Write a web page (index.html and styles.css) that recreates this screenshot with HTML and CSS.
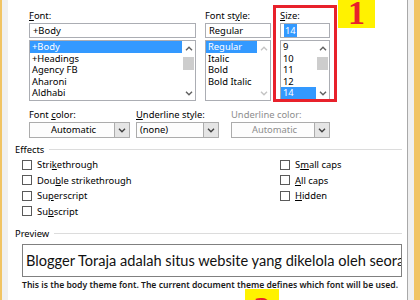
FILE: index.html
```html
<!DOCTYPE html>
<html lang="en">
<head>
  <meta charset="UTF-8" />
  <title>Font</title>
  <link rel="stylesheet" href="styles.css">
</head>
<body>
  <div class="window">
    <div class="dialog">
      <div class="font-grid">
        <div class="field">
          <div class="label"><u>F</u>ont:</div>
          <div class="textbox">+Body</div>
          <div class="listbox">
            <ul>
              <li class="selected">+Body</li>
              <li>+Headings</li>
              <li>Agency FB</li>
              <li>Aharoni</li>
              <li>Aldhabi</li>
            </ul>
            <div class="scrollbar">
              <svg class="arrow" viewBox="0 0 8 5" width="8" height="5"><path d="M1 4.2 L4 1.2 L7 4.2" fill="none" stroke="#606060" stroke-width="1.4"/></svg>
              <div class="track"><span class="thumb"></span></div>
              <svg class="arrow" viewBox="0 0 8 5" width="8" height="5"><path d="M1 0.8 L4 3.8 L7 0.8" fill="none" stroke="#606060" stroke-width="1.4"/></svg>
            </div>
          </div>
        </div>

        <div class="field">
          <div class="label">Font st<u>y</u>le:</div>
          <div class="textbox">Regular</div>
          <div class="listbox">
            <ul>
              <li class="selected">Regular</li>
              <li>Italic</li>
              <li>Bold</li>
              <li>Bold Italic</li>
            </ul>
            <div class="scrollbar">
              <svg class="arrow" viewBox="0 0 8 5" width="8" height="5"><path d="M1 4.2 L4 1.2 L7 4.2" fill="none" stroke="#c4c4c4" stroke-width="1.4"/></svg>
              <div class="track"></div>
              <svg class="arrow" viewBox="0 0 8 5" width="8" height="5"><path d="M1 0.8 L4 3.8 L7 0.8" fill="none" stroke="#c4c4c4" stroke-width="1.4"/></svg>
            </div>
          </div>
        </div>

        <div class="field">
          <div class="label"><u>S</u>ize:</div>
          <div class="textbox"><span class="text-selected">14</span></div>
          <div class="listbox">
            <ul>
              <li>9</li>
              <li>10</li>
              <li>11</li>
              <li>12</li>
              <li class="selected">14</li>
            </ul>
            <div class="scrollbar">
              <svg class="arrow" viewBox="0 0 8 5" width="8" height="5"><path d="M1 4.2 L4 1.2 L7 4.2" fill="none" stroke="#606060" stroke-width="1.4"/></svg>
              <div class="track"><span class="thumb"></span></div>
              <svg class="arrow" viewBox="0 0 8 5" width="8" height="5"><path d="M1 0.8 L4 3.8 L7 0.8" fill="none" stroke="#606060" stroke-width="1.4"/></svg>
            </div>
          </div>
        </div>
      </div>

      <div class="combo-row">
        <div class="field color-field">
          <div class="label">Font <u>c</u>olor:</div>
          <div class="combo">
            <span class="combo-text center">Automatic</span>
            <span class="combo-btn"><svg viewBox="0 0 8 5" width="8" height="5"><path d="M1 0.8 L4 3.8 L7 0.8" fill="none" stroke="#404040" stroke-width="1.4"/></svg></span>
          </div>
        </div>
        <div class="field underline-field">
          <div class="label"><u>U</u>nderline style:</div>
          <div class="combo">
            <span class="combo-text">(none)</span>
            <span class="combo-btn"><svg viewBox="0 0 8 5" width="8" height="5"><path d="M1 0.8 L4 3.8 L7 0.8" fill="none" stroke="#404040" stroke-width="1.4"/></svg></span>
          </div>
        </div>
        <div class="field ucolor-field disabled">
          <div class="label">Underline color:</div>
          <div class="combo">
            <span class="combo-text center">Automatic</span>
            <span class="combo-btn"><svg viewBox="0 0 8 5" width="8" height="5"><path d="M1 0.8 L4 3.8 L7 0.8" fill="none" stroke="#404040" stroke-width="1.4"/></svg></span>
          </div>
        </div>
      </div>

      <div class="section-head"><span>Effects</span></div>
      <div class="effects">
        <div class="check-col">
          <div class="check"><span class="box"></span>Stri<u>k</u>ethrough</div>
          <div class="check"><span class="box"></span>Dou<u>b</u>le strikethrough</div>
          <div class="check"><span class="box"></span>Su<u>p</u>erscript</div>
          <div class="check"><span class="box"></span>Su<u>b</u>script</div>
        </div>
        <div class="check-col">
          <div class="check"><span class="box"></span>S<u>m</u>all caps</div>
          <div class="check"><span class="box"></span><u>A</u>ll caps</div>
          <div class="check"><span class="box"></span><u>H</u>idden</div>
        </div>
      </div>

      <div class="section-head preview-head"><span>Preview</span></div>
      <div class="preview">Blogger Toraja adalah situs website yang dikelola oleh seorang</div>
      <div class="preview-note">This is the body theme font. The current document theme defines which font will be used.</div>
    </div>
  </div>

  <div class="mark-box"></div>
  <div class="mark-label one">1</div>
  <div class="mark-label two">2</div>
</body>
</html>
```

FILE: styles.css
```css
body {
  margin: 0;
  height: 300px;
  overflow: hidden;
  background-color: #f1c463;
  font-family: "Noto Sans", "Open Sans", sans-serif;
  font-size: 9.4px;
  color: #000;
}

.window {
  height: 300px;
  margin: 0 6px 0 2px;
  padding: 0 6px;
  background-color: #f0f0f0;
  box-sizing: border-box;
}

.dialog {
  height: 100%;
  background-color: #fff;
  border-right: 1px solid #a9a9a9;
  box-sizing: border-box;
}

u {
  text-decoration-thickness: 1px;
  text-underline-offset: 1px;
}

.label {
  height: 12px;
  line-height: 12px;
  white-space: nowrap;
}

/* font / style / size lists */
.font-grid {
  display: grid;
  grid-template-columns: 167px 66px 50px;
  column-gap: 9px;
  padding: 10px 0 0 21px;
}

.textbox {
  height: 15px;
  margin-top: 1px;
  line-height: 13px;
  padding: 0 3px;
  border: 1px solid #abadb3;
  box-sizing: border-box;
  white-space: nowrap;
}

.text-selected {
  background-color: #3399ff;
  color: #fff;
  padding: 0 1px;
}

.listbox {
  display: flex;
  height: 61px;
  margin-top: 2px;
  border: 1px solid #abadb3;
  box-sizing: border-box;
}

.listbox ul {
  flex: 1;
  list-style: none;
  margin: 0;
  padding: 0;
}

.listbox li {
  height: 11.6px;
  line-height: 11.6px;
  padding-left: 2px;
  white-space: nowrap;
}

.listbox li.selected {
  background-color: #3399ff;
  color: #fff;
}

.scrollbar {
  width: 13px;
  display: flex;
  flex-direction: column;
  align-items: center;
  background-color: #fff;
}

.scrollbar .arrow {
  margin: 5px 0 4px;
}

.track {
  flex: 1;
  width: 100%;
}

.thumb {
  display: block;
  width: 11px;
  height: 13px;
  margin: 2px auto 0;
  background-color: #cdcdcd;
}

/* colour / underline combos */
.combo-row {
  display: flex;
  padding: 8px 0 0 21px;
}

.color-field { width: 101px; margin-right: 6px; }
.underline-field { width: 83px; margin-right: 12px; }
.ucolor-field { width: 99px; }

.combo {
  display: flex;
  height: 16px;
  margin-top: 1px;
  border: 1px solid #acacac;
  box-sizing: border-box;
  background-color: #fdfdfd;
}

.combo-text {
  flex: 1;
  line-height: 14px;
  padding-left: 3px;
  white-space: nowrap;
}

.combo-text.center {
  text-align: center;
}

.combo-btn {
  width: 14px;
  display: flex;
  align-items: center;
  justify-content: center;
  background-color: #e5e5e5;
  border-left: 1px solid #acacac;
}

.disabled .label,
.disabled .combo-text {
  color: #8d8d8d;
}

/* group headings with a rule */
.section-head {
  display: flex;
  align-items: center;
  height: 12px;
  margin: 5px 5px 0 7px;
}

.section-head::after {
  content: "";
  flex: 1;
  height: 1px;
  margin-left: 5px;
  background-color: #dcdcdc;
}

.preview-head {
  margin-top: 8px;
}

.effects {
  display: grid;
  grid-template-columns: 258px 1fr;
  padding: 2px 0 0 14px;
  height: 62px;
}

.check {
  display: flex;
  align-items: center;
  height: 15.5px;
  white-space: nowrap;
}

.box {
  width: 10px;
  height: 10px;
  margin-right: 5px;
  border: 1px solid #5a5a5a;
  box-sizing: border-box;
  background-color: #fff;
}

.preview {
  margin: 5px 5px 0 14px;
  height: 33px;
  line-height: 31px;
  padding-left: 3px;
  border: 1px solid #808080;
  box-sizing: border-box;
  overflow: hidden;
  white-space: nowrap;
  font-family: "Lato", sans-serif;
  font-size: 14.6px;
  color: #111;
}

.preview-note {
  margin: 2px 0 0 14px;
  font-size: 8.6px;
  font-weight: 600;
  color: #1a1a1a;
  white-space: nowrap;
}

/* red annotation marks over the dialog */
.mark-box {
  position: absolute;
  left: 273px;
  top: 5px;
  width: 64px;
  height: 97px;
  border: 3px solid #e8212b;
  box-sizing: border-box;
}

.mark-label {
  position: absolute;
  background-color: #fff200;
  color: #e8212b;
  font-family: "Liberation Serif", serif;
  font-weight: bold;
  font-size: 34px;
  text-align: center;
  overflow: hidden;
}

.mark-label.one {
  left: 338px;
  top: -2px;
  width: 37px;
  height: 30px;
  line-height: 30px;
}

.mark-label.two {
  left: 245px;
  top: 289px;
  width: 34px;
  height: 11px;
  line-height: 40px;
}
```
